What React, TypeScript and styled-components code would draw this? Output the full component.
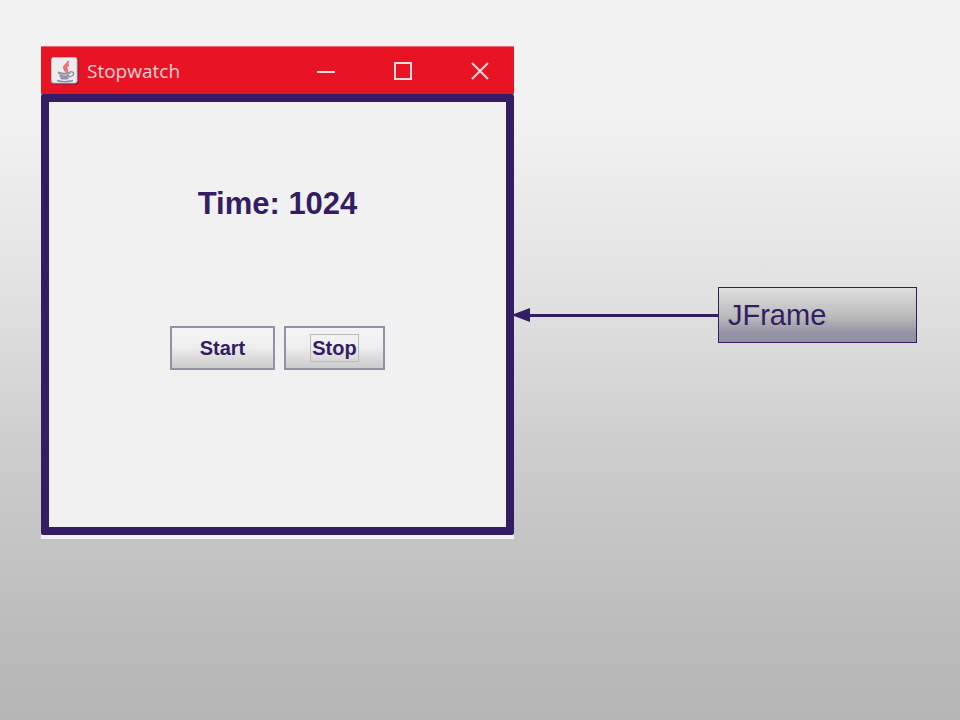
import React, { useState } from "react";
import styled, { createGlobalStyle } from "styled-components";

const ink = "#341d64";

const GlobalStyle = createGlobalStyle`
  * { box-sizing: border-box; }
  body {
    margin: 0;
    font-family: "Liberation Sans", Arial, sans-serif;
    color: ${ink};
  }
`;

const Slide = styled.main`
  min-height: 100vh;
  padding: 46px 43px 46px 41px;
  display: grid;
  grid-template-columns: minmax(0, 473fr) minmax(0, 204fr) minmax(0, 199fr);
  align-items: start;
  background: linear-gradient(
    #f2f2f2 0%, #f2f2f2 16%, #e2e2e2 40%, #cbcbcb 65%, #b9b9b9 92%, #b6b6b6 100%
  );
`;

const Frame = styled.section`
  background: #f2f2f2;
  padding-bottom: 4px;
`;

const TitleBar = styled.header`
  height: 48px;
  padding-left: 10px;
  display: flex;
  align-items: center;
  gap: 8px;
  background: #e81424;
  border-top: 1px solid #ec6a76;
  color: #f8d0d6;
`;

const Title = styled.h1`
  flex: 1;
  margin: 0;
  font: 400 19px/28px "Open Sans", "Noto Sans", sans-serif;
`;

const WindowButtons = styled.div`
  display: flex;
`;

const WindowButton = styled.button`
  width: 77px;
  height: 46px;
  padding: 0 0 0 8px;
  border: 0;
  background: none;
  color: #fbdade;
  display: grid;
  place-items: center;
`;

const Content = styled.div`
  min-height: 441px;
  padding: 84px 0 24px;
  border: 8px solid ${ink};
  border-radius: 2px;
  background: #f1f1f1;
  display: flex;
  flex-direction: column;
  align-items: center;
  gap: 104px;
`;

const Time = styled.output`
  font-size: 31px;
  font-weight: 700;
  line-height: 36px;
`;

const Controls = styled.div`
  display: flex;
  gap: 9px;
`;

const Button = styled.button<{ $wide?: boolean }>`
  width: ${(p) => (p.$wide ? 105 : 101)}px;
  height: 44px;
  padding: 0;
  border: 2px solid #9490a6;
  background: linear-gradient(#f4f4f4 0%, #f0f0f0 45%, #e2e2e2 65%, #cccccc 100%);
  color: ${ink};
  font: 700 20px/26px "Liberation Sans", Arial, sans-serif;
`;

const ButtonText = styled.span<{ $focused?: boolean }>`
  display: inline-block;
  padding: 0 1px;
  border: 1px solid ${(p) => (p.$focused ? "#b9b9bf" : "transparent")};
`;

const Connector = styled.div`
  height: 56px;
  margin-top: 241px;
  display: flex;
  align-items: center;
  color: ${ink};

  svg { flex: none; display: block; }
`;

const Line = styled.div`
  flex: 1;
  height: 3px;
  background: ${ink};
`;

const Label = styled.div`
  height: 56px;
  margin-top: 241px;
  padding: 0 9px;
  border: 1px solid ${ink};
  background: linear-gradient(#dedede 0%, #cacaca 30%, #b8b8b8 55%, #9490a4 85%, #9490a4 100%);
  font-size: 29px;
  line-height: 54px;
`;

function JavaIcon() {
  return (
    <svg width="28" height="28" viewBox="0 0 28 28" fill="none" aria-hidden="true">
      <rect x="1.5" y="1.5" width="26" height="26" rx="2" fill={ink} opacity=".65" />
      <rect x=".5" y=".5" width="25.5" height="25.5" rx="2" fill="#ededed" stroke="#c5bdc7" />
      <path d="M17 4c1 3-5 4-4 7 .3 1 1.5 2 1 3.5M18 8c-3 1-4 3-2 4.500 1 1 0 2-1 2.500" stroke="#ef7079" strokeWidth="2" />
      <path d="M7 15.500c3 1.500 9 1.500 12 0M8.500 18.500c3 1.200 7 1.200 10 0M9.500 21c3 .8 5 .8 8 0" stroke="#918fa3" strokeWidth="2" />
      <path d="M19 15c5-1 5 4-1 5M6 23.500c4 1.300 11 1.300 16 0" stroke="#918fa3" strokeWidth="1.500" />
    </svg>
  );
}

export default function App() {
  const [time] = useState(1024);
  return (
    <>
      <GlobalStyle />
      <Slide>
        <Frame aria-label="Stopwatch">
          <TitleBar>
            <JavaIcon />
            <Title>Stopwatch</Title>
            <WindowButtons>
              <WindowButton type="button" aria-label="Minimize">
                <svg width="18" height="18" viewBox="0 0 18 18" stroke="currentColor" strokeWidth="2">
                  <path d="M0 10h18" />
                </svg>
              </WindowButton>
              <WindowButton type="button" aria-label="Maximize">
                <svg width="18" height="18" viewBox="0 0 18 18" fill="none" stroke="currentColor" strokeWidth="2">
                  <rect x="1" y="1" width="16" height="16" />
                </svg>
              </WindowButton>
              <WindowButton type="button" aria-label="Close">
                <svg width="18" height="18" viewBox="0 0 18 18" stroke="currentColor" strokeWidth="2">
                  <path d="M1 1l16 16M17 1L1 17" />
                </svg>
              </WindowButton>
            </WindowButtons>
          </TitleBar>
          <Content>
            <Time>Time: {time}</Time>
            <Controls>
              <Button type="button" $wide><ButtonText>Start</ButtonText></Button>
              <Button type="button"><ButtonText $focused>Stop</ButtonText></Button>
            </Controls>
          </Content>
        </Frame>
        <Connector aria-hidden="true">
          <svg width="16" height="14" viewBox="0 0 16 14" fill="currentColor">
            <path d="M0 6L16 0v14L0 8z" />
          </svg>
          <Line />
        </Connector>
        <Label>JFrame</Label>
      </Slide>
    </>
  );
}
